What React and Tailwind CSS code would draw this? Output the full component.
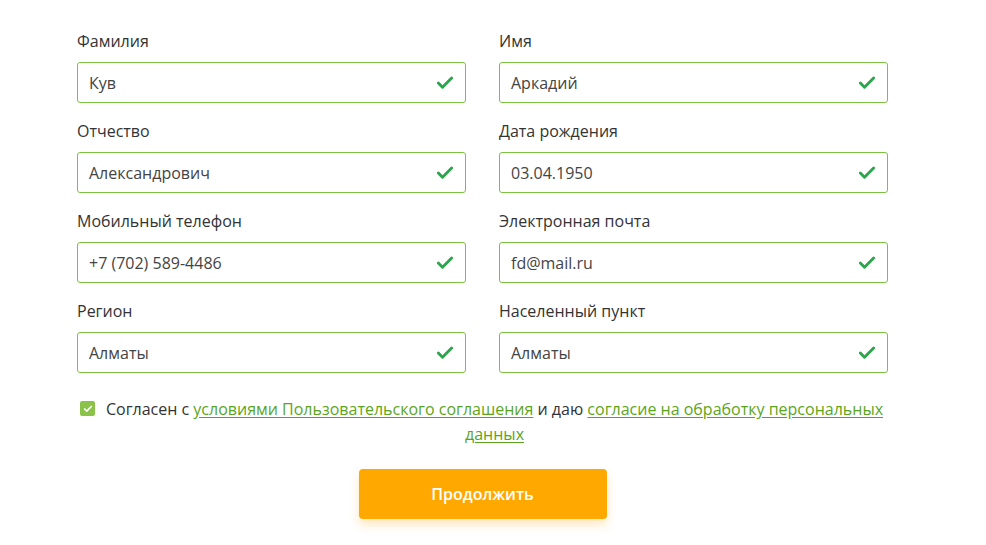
import { Check } from "lucide-react";

const fields = [
  ["Фамилия", "Кув"],
  ["Имя", "Аркадий"],
  ["Отчество", "Александрович"],
  ["Дата рождения", "03.04.1950"],
  ["Мобильный телефон", "+7 (702) 589-4486"],
  ["Электронная почта", "fd@mail.ru"],
  ["Регион", "Алматы"],
  ["Населенный пункт", "Алматы"],
];

function Field({ label, value }) {
  return (
    <div>
      <div className="text-[16px] leading-[20px] text-[#333] mb-[11px]">{label}</div>
      <div className="h-[41px] border border-[#7cc242] rounded-[3px] flex items-center pl-[11px] pr-[10px]">
        <span className="flex-1 text-[16px] text-[#444]">{value}</span>
        <Check className="w-[20px] h-[20px] text-[#2ea44f]" strokeWidth={3.5} />
      </div>
    </div>
  );
}

export default function App() {
  return (
    <div className="bg-white w-[986px] h-[545px] font-['Open_Sans',sans-serif]">
      <div className="pl-[77px] w-[888px] pt-[31px]">
        <div className="grid grid-cols-2 gap-x-[33px] gap-y-[18px]">
          {fields.map(([l, v]) => (
            <Field key={l} label={l} value={v} />
          ))}
        </div>

        <div className="flex items-start mt-[24px] pl-[3px]">
          <div className="w-[15px] h-[15px] mt-[4px] rounded-[2px] bg-[#8bc34a] flex items-center justify-center shrink-0">
            <Check className="w-[10px] h-[10px] text-white" strokeWidth={4} />
          </div>
          <p className="flex-1 pl-[6px] text-center text-[16px] leading-[25px] text-[#333]">
            Согласен с{" "}
            <a className="text-[#5ba51c] underline underline-offset-2">условиями Пользовательского соглашения</a> и даю{" "}
            <a className="text-[#5ba51c] underline underline-offset-2">согласие на обработку персональных данных</a>
          </p>
        </div>

        <div className="flex justify-center mt-[22px]">
          <button className="w-[248px] h-[50px] rounded-[4px] bg-[#ffa800] text-white text-[16px] font-semibold shadow-[0_6px_10px_rgba(255,168,0,0.25)]">
            Продолжить
          </button>
        </div>
      </div>
    </div>
  );
}
